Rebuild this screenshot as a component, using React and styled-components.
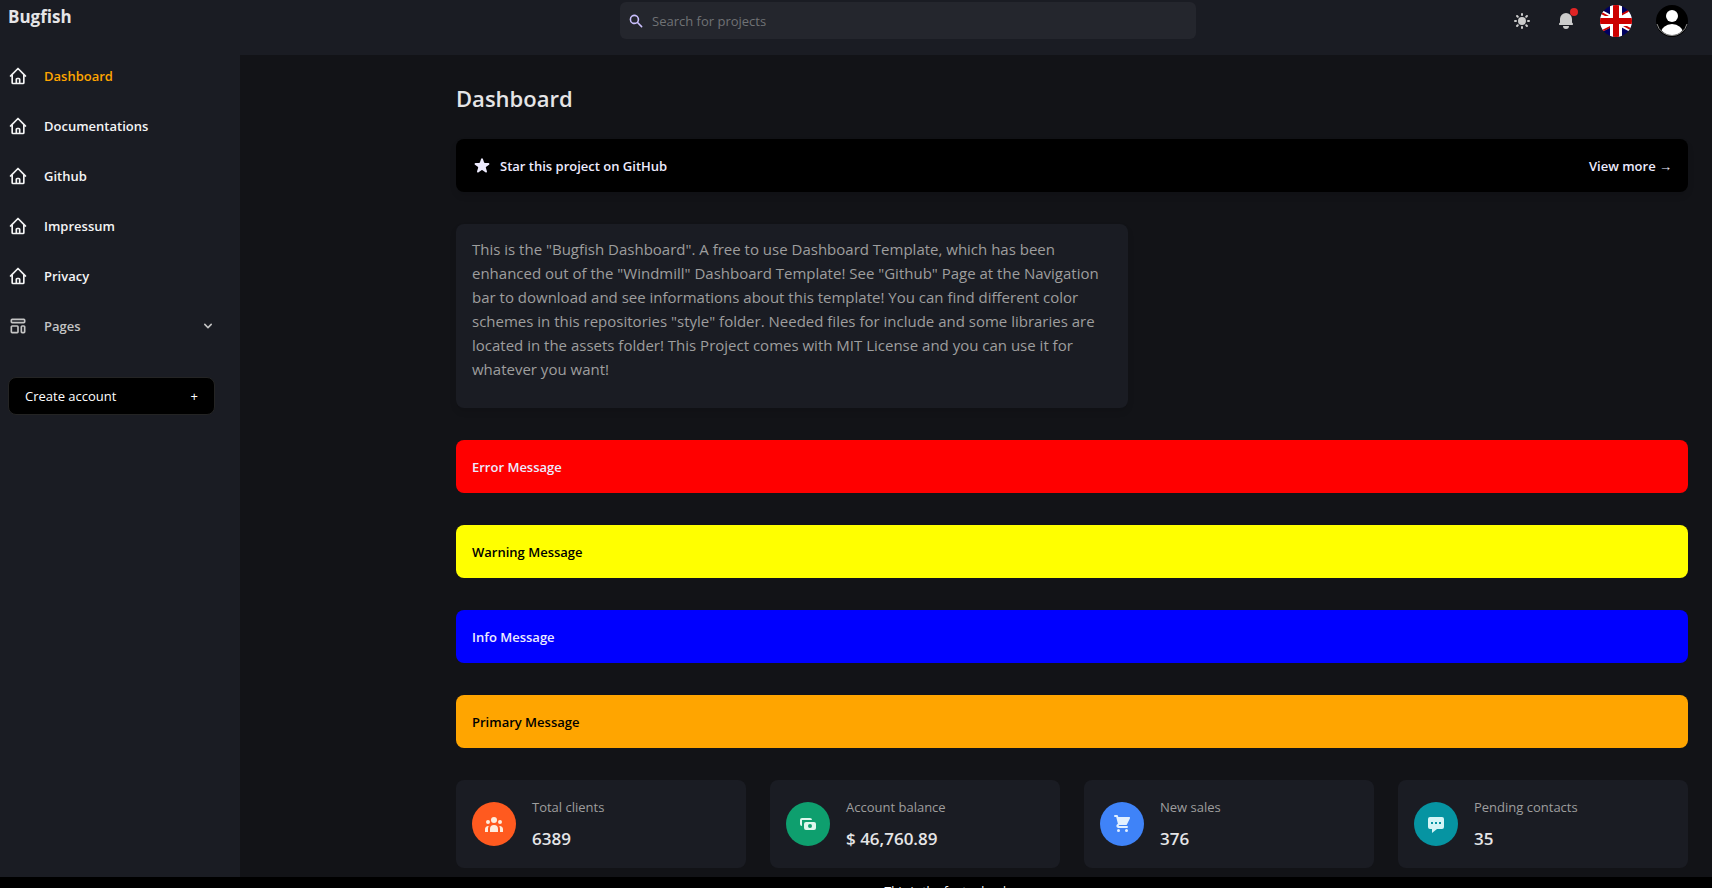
import React from "react";
import styled, { createGlobalStyle, css } from "styled-components";

const Global = createGlobalStyle`
  *, *::before, *::after { box-sizing: border-box; }
  html, body, #root { height: 100%; }
  body {
    margin: 0;
    background: #121317;
    color: #d5d6d7;
    font-family: "Open Sans", "Noto Sans", sans-serif;
    font-size: 14px;
    line-height: 20px;
    overflow: hidden;
  }
  h1, h2, p, ul { margin: 0; padding: 0; }
  ul { list-style: none; }
  a { color: inherit; text-decoration: none; }
  button, input { font: inherit; color: inherit; }
  svg { display: block; flex: none; }
`;

const Page = styled.div`
  height: 100vh;
  display: flex;
  flex-direction: column;
`;

const TopBar = styled.header`
  flex: none;
  height: 55px;
  padding: 2px 24px 0 8px;
  display: flex;
  align-items: flex-start;
  background: #1a1c23;
`;

const Brand = styled.a`
  width: 232px;
  padding-top: 2px;
  color: #e5e5e7;
  font-size: 17px;
  font-weight: 700;
  line-height: 26px;
`;

const SearchArea = styled.div`
  flex: 1;
  display: flex;
  justify-content: center;
  padding-left: 178px;
`;

const SearchBox = styled.label`
  width: 100%;
  max-width: 576px;
  height: 37px;
  padding: 0 8px;
  display: flex;
  align-items: center;
  gap: 8px;
  border-radius: 6px;
  background: #24262d;
  color: #cabffd;
`;

const SearchInput = styled.input`
  flex: 1;
  min-width: 0;
  padding: 0;
  border: 0;
  outline: 0;
  background: transparent;
  color: #d5d6d7;
  font-size: 13px;
  &::placeholder { color: #707275; opacity: 1; }
`;

const Tools = styled.div`
  width: 290px;
  height: 37px;
  display: flex;
  align-items: center;
  justify-content: flex-end;
  gap: 24px;
`;

const ToolButton = styled.button`
  position: relative;
  padding: 0;
  border: 0;
  border-radius: 50%;
  background: transparent;
  color: #cccccc;
  cursor: pointer;
`;

const Badge = styled.span`
  position: absolute;
  top: -3px;
  right: -2px;
  width: 8px;
  height: 8px;
  border-radius: 50%;
  background: #e02424;
`;

const Body = styled.div`
  flex: 1;
  min-height: 0;
  display: flex;
`;

const Sidebar = styled.nav`
  flex: none;
  width: 240px;
  padding: 10px 24px 0 8px;
  background: #1a1c23;
`;

const NavList = styled.ul`
  display: flex;
  flex-direction: column;
  gap: 28px;
`;

const navRow = css`
  width: 100%;
  height: 22px;
  padding: 0;
  display: flex;
  align-items: center;
  gap: 16px;
  border: 0;
  background: transparent;
  font-size: 13px;
  font-weight: 600;
  line-height: 20px;
  text-align: left;
`;

const NavLink = styled.a`
  ${navRow}
  color: #f4f4f5;
  span { color: ${(p) => (p.$active ? "orange" : "inherit")}; }
`;

const NavToggle = styled.button`
  ${navRow}
  color: #c4c4c4;
  cursor: pointer;
  span { flex: 1; }
`;

const CreateButton = styled.button`
  width: 100%;
  max-width: 207px;
  height: 38px;
  margin: 40px 0 0;
  padding: 0 16px;
  display: flex;
  align-items: center;
  justify-content: space-between;
  border: 1px solid #242424;
  border-radius: 8px;
  background: #000000;
  color: #ffffff;
  font-size: 13px;
  cursor: pointer;
`;

const Main = styled.main`
  flex: 1;
  min-width: 0;
  padding: 0 24px 0 216px;
`;

const Title = styled.h1`
  padding: 25px 0 23px;
  color: #e5e5e7;
  font-size: 22px;
  font-weight: 600;
  line-height: 36px;
`;

const Banner = styled.a`
  height: 53px;
  margin-bottom: 32px;
  padding: 0 16px;
  display: flex;
  align-items: center;
  justify-content: space-between;
  border-radius: 8px;
  background: #000000;
  color: #edebfe;
  font-size: 13px;
  font-weight: 600;
  box-shadow: 0 4px 6px rgba(0, 0, 0, 0.1);
`;

const BannerLabel = styled.span`
  display: flex;
  align-items: center;
  gap: 8px;
`;

const TextCard = styled.section`
  max-width: 672px;
  margin-bottom: 32px;
  padding: 13px 16px 27px;
  border-radius: 8px;
  background: #1a1c23;
  color: #9e9e9e;
  font-size: 15px;
  line-height: 24px;
  box-shadow: 0 4px 6px rgba(0, 0, 0, 0.1);
`;

const Alert = styled.div`
  height: 53px;
  margin-bottom: 32px;
  padding: 0 16px;
  display: flex;
  align-items: center;
  border-radius: 8px;
  background: ${(p) => p.$fill};
  color: ${(p) => p.$ink};
  font-size: 13px;
  font-weight: 600;
`;

const Stats = styled.section`
  display: grid;
  grid-template-columns: repeat(4, 1fr);
  gap: 24px;
`;

const StatCard = styled.article`
  height: 88px;
  padding: 0 16px;
  display: flex;
  align-items: center;
  gap: 16px;
  border-radius: 8px;
  background: #1a1c23;
`;

const StatIcon = styled.div`
  flex: none;
  width: 44px;
  height: 44px;
  display: grid;
  place-items: center;
  border-radius: 50%;
  background: ${(p) => p.$fill};
  color: ${(p) => p.$ink};
`;

const StatText = styled.div`
  padding-top: 2px;
`;

const StatLabel = styled.p`
  margin-bottom: 8px;
  color: #9e9e9e;
  font-size: 13px;
  line-height: 20px;
`;

const StatValue = styled.p`
  color: #e5e5e7;
  font-size: 17px;
  font-weight: 600;
  line-height: 28px;
`;

const Footer = styled.footer`
  position: fixed;
  left: 0;
  right: 0;
  bottom: 0;
  height: 11px;
  padding-left: 182px;
  overflow: hidden;
  background: #000000;
  color: #ffffff;
  font-size: 12px;
  line-height: 30px;
  text-align: center;
`;

const HomeIcon = () => (
  <svg width="20" height="20" viewBox="0 0 24 24" fill="none" stroke="currentColor" strokeWidth="2" strokeLinecap="round" strokeLinejoin="round" aria-hidden="true">
    <path d="M3 12l2-2m0 0l7-7 7 7M5 10v10a1 1 0 001 1h3m10-11l2 2m-2-2v10a1 1 0 01-1 1h-3m-6 0a1 1 0 001-1v-4a1 1 0 011-1h2a1 1 0 011 1v4a1 1 0 001 1m-6 0h6" />
  </svg>
);

const PagesIcon = () => (
  <svg width="20" height="20" viewBox="0 0 24 24" fill="none" stroke="currentColor" strokeWidth="2" strokeLinecap="round" strokeLinejoin="round" aria-hidden="true">
    <path d="M4 5a1 1 0 011-1h14a1 1 0 011 1v2a1 1 0 01-1 1H5a1 1 0 01-1-1V5zM4 13a1 1 0 011-1h6a1 1 0 011 1v6a1 1 0 01-1 1H5a1 1 0 01-1-1v-6zM16 13a1 1 0 011-1h2a1 1 0 011 1v6a1 1 0 01-1 1h-2a1 1 0 01-1-1v-6z" />
  </svg>
);

const Solid = ({ size = 20, children }) => (
  <svg width={size} height={size} viewBox="0 0 20 20" fill="currentColor" fillRule="evenodd" aria-hidden="true">
    {children}
  </svg>
);

const FlagIcon = () => (
  <svg width="32" height="32" viewBox="0 0 32 32" aria-hidden="true">
    <defs>
      <clipPath id="flag-round"><circle cx="16" cy="16" r="16" /></clipPath>
    </defs>
    <g clipPath="url(#flag-round)">
      <path fill="#00005f" d="M0 0h32v32H0z" />
      <path stroke="#fff" strokeWidth="6" d="M-8 3L40 29M-8 29L40 3" />
      <path fill="#cc0000" d="M0 6l9 5H5L-1 8zM0 26l10-5h4L0 28zM32 5l-11 6h-4L32 3zM32 26l-9-5h4l7 4z" />
      <path fill="#fff" d="M10 0h12v32H10zM0 11h32v10H0z" />
      <path fill="#cc0000" d="M13 0h6v32h-6zM0 13h32v6H0z" />
    </g>
  </svg>
);

const AvatarIcon = () => (
  <svg width="32" height="32" viewBox="0 0 32 32" aria-hidden="true">
    <defs>
      <clipPath id="avatar-round"><circle cx="16" cy="16" r="14" /></clipPath>
    </defs>
    <circle cx="16" cy="16" r="16" fill="#000" />
    <path d="M1 19a15.500 15.500 0 0030 0" fill="none" stroke="#8a8a8a" />
    <circle cx="16" cy="11" r="6" fill="#fff" />
    <ellipse cx="16" cy="28" rx="11" ry="9" fill="#fff" clipPath="url(#avatar-round)" />
  </svg>
);

const navItems = ["Dashboard", "Documentations", "Github", "Impressum", "Privacy"];

const alerts = [
  { text: "Error Message", fill: "#ff0000", ink: "#edebfe" },
  { text: "Warning Message", fill: "#ffff00", ink: "#000000" },
  { text: "Info Message", fill: "#0000ff", ink: "#edebfe" },
  { text: "Primary Message", fill: "#ffa500", ink: "#000000" },
];

const stats = [
  {
    label: "Total clients", value: "6389", fill: "#ff5a1f", ink: "#feecdc",
    path: "M13 6a3 3 0 11-6 0 3 3 0 016 0zM18 8a2 2 0 11-4 0 2 2 0 014 0zM14 15a4 4 0 00-8 0v3h8v-3zM6 8a2 2 0 11-4 0 2 2 0 014 0zM16 18v-3a5.972 5.972 0 00-.75-2.906A3.005 3.005 0 0119 15v3h-3zM4.75 12.094A5.973 5.973 0 004 15v3H1v-3a3 3 0 013.75-2.906z",
  },
  {
    label: "Account balance", value: "$ 46,760.89", fill: "#0e9f6e", ink: "#def7ec",
    path: "M4 4a2 2 0 00-2 2v4a2 2 0 002 2V6h10a2 2 0 00-2-2H4zm2 6a2 2 0 012-2h8a2 2 0 012 2v4a2 2 0 01-2 2H8a2 2 0 01-2-2v-4zm6 4a2 2 0 100-4 2 2 0 000 4z",
  },
  {
    label: "New sales", value: "376", fill: "#3f83f8", ink: "#e1effe",
    path: "M3 1a1 1 0 000 2h1.22l.305 1.222a.997.997 0 00.01.042l1.358 5.43-.893.892C3.74 11.846 4.632 14 6.414 14H15a1 1 0 000-2H6.414l1-1H14a1 1 0 00.894-.553l3-6A1 1 0 0017 3H6.28l-.31-1.243A1 1 0 005 1H3zM16 16.500a1.500 1.500 0 11-3 0 1.500 1.500 0 013 0zM6.500 18a1.500 1.500 0 100-3 1.500 1.500 0 000 3z",
  },
  {
    label: "Pending contacts", value: "35", fill: "#0694a2", ink: "#d5f5f6",
    path: "M18 5v8a2 2 0 01-2 2h-5l-5 4v-4H4a2 2 0 01-2-2V5a2 2 0 012-2h12a2 2 0 012 2zM7 8H5v2h2V8zm2 0h2v2H9V8zm6 0h-2v2h2V8z",
  },
];

export default function App() {
  return (
    <Page>
      <Global />
      <TopBar>
        <Brand href="#">Bugfish</Brand>
        <SearchArea>
          <SearchBox>
            <Solid size={16}>
              <path d="M8 4a4 4 0 100 8 4 4 0 000-8zM2 8a6 6 0 1110.890 3.476l4.817 4.817a1 1 0 01-1.414 1.414l-4.816-4.816A6 6 0 012 8z" />
            </Solid>
            <SearchInput type="text" placeholder="Search for projects" aria-label="Search" />
          </SearchBox>
        </SearchArea>
        <Tools>
          <ToolButton aria-label="Toggle color mode">
            <Solid>
              <path d="M10 2a1 1 0 011 1v1a1 1 0 11-2 0V3a1 1 0 011-1zm4 8a4 4 0 11-8 0 4 4 0 018 0zm-.464 4.950l.707.707a1 1 0 001.414-1.414l-.707-.707a1 1 0 00-1.414 1.414zm2.120-10.607a1 1 0 010 1.414l-.706.707a1 1 0 11-1.414-1.414l.707-.707a1 1 0 011.414 0zM17 11a1 1 0 100-2h-1a1 1 0 100 2h1zm-7 4a1 1 0 011 1v1a1 1 0 11-2 0v-1a1 1 0 011-1zM5.050 6.464A1 1 0 106.465 5.050l-.708-.707a1 1 0 00-1.414 1.414l.707.707zm1.414 8.486l-.707.707a1 1 0 01-1.414-1.414l.707-.707a1 1 0 011.414 1.414zM4 11a1 1 0 100-2H3a1 1 0 000 2h1z" />
            </Solid>
          </ToolButton>
          <ToolButton aria-label="Notifications">
            <Solid>
              <path d="M10 2a6 6 0 00-6 6v3.586l-.707.707A1 1 0 004 14h12a1 1 0 00.707-1.707L16 11.586V8a6 6 0 00-6-6zM10 18a3 3 0 01-3-3h6a3 3 0 01-3 3z" />
            </Solid>
            <Badge />
          </ToolButton>
          <ToolButton aria-label="Language"><FlagIcon /></ToolButton>
          <ToolButton aria-label="Account"><AvatarIcon /></ToolButton>
        </Tools>
      </TopBar>
      <Body>
        <Sidebar>
          <NavList>
            {navItems.map((name, i) => (
              <li key={name}>
                <NavLink href="#" $active={i === 0}>
                  <HomeIcon />
                  <span>{name}</span>
                </NavLink>
              </li>
            ))}
            <li>
              <NavToggle>
                <PagesIcon />
                <span>Pages</span>
                <Solid size={16}>
                  <path d="M5.293 7.293a1 1 0 011.414 0L10 10.586l3.293-3.293a1 1 0 111.414 1.414l-4 4a1 1 0 01-1.414 0l-4-4a1 1 0 010-1.414z" />
                </Solid>
              </NavToggle>
            </li>
          </NavList>
          <CreateButton>
            <span>Create account</span>
            <span aria-hidden="true">+</span>
          </CreateButton>
        </Sidebar>
        <Main>
          <Title>Dashboard</Title>
          <Banner href="#">
            <BannerLabel>
              <Solid>
                <path d="M9.049 2.927c.3-.921 1.603-.921 1.902 0l1.070 3.292a1 1 0 00.950.690h3.462c.969 0 1.371 1.240.588 1.810l-2.800 2.034a1 1 0 00-.364 1.118l1.070 3.292c.3.921-.755 1.688-1.540 1.118l-2.800-2.034a1 1 0 00-1.175 0l-2.800 2.034c-.784.570-1.838-.197-1.539-1.118l1.070-3.292a1 1 0 00-.364-1.118L2.980 8.720c-.783-.570-.380-1.810.588-1.810h3.461a1 1 0 00.951-.690l1.070-3.292z" />
              </Solid>
              Star this project on GitHub
            </BannerLabel>
            <span>View more →</span>
          </Banner>
          <TextCard>
            <p>
              This is the "Bugfish Dashboard". A free to use Dashboard Template, which has been enhanced out of the
              "Windmill" Dashboard Template! See "Github" Page at the Navigation bar to download and see informations
              about this template! You can find different color schemes in this repositories "style" folder. Needed
              files for include and some libraries are located in the assets folder! This Project comes with MIT
              License and you can use it for whatever you want!
            </p>
          </TextCard>
          {alerts.map((a) => (
            <Alert key={a.text} $fill={a.fill} $ink={a.ink}>{a.text}</Alert>
          ))}
          <Stats>
            {stats.map((s) => (
              <StatCard key={s.label}>
                <StatIcon $fill={s.fill} $ink={s.ink}>
                  <Solid><path d={s.path} /></Solid>
                </StatIcon>
                <StatText>
                  <StatLabel>{s.label}</StatLabel>
                  <StatValue>{s.value}</StatValue>
                </StatText>
              </StatCard>
            ))}
          </Stats>
        </Main>
      </Body>
      <Footer>This is the footer hook</Footer>
    </Page>
  );
}
